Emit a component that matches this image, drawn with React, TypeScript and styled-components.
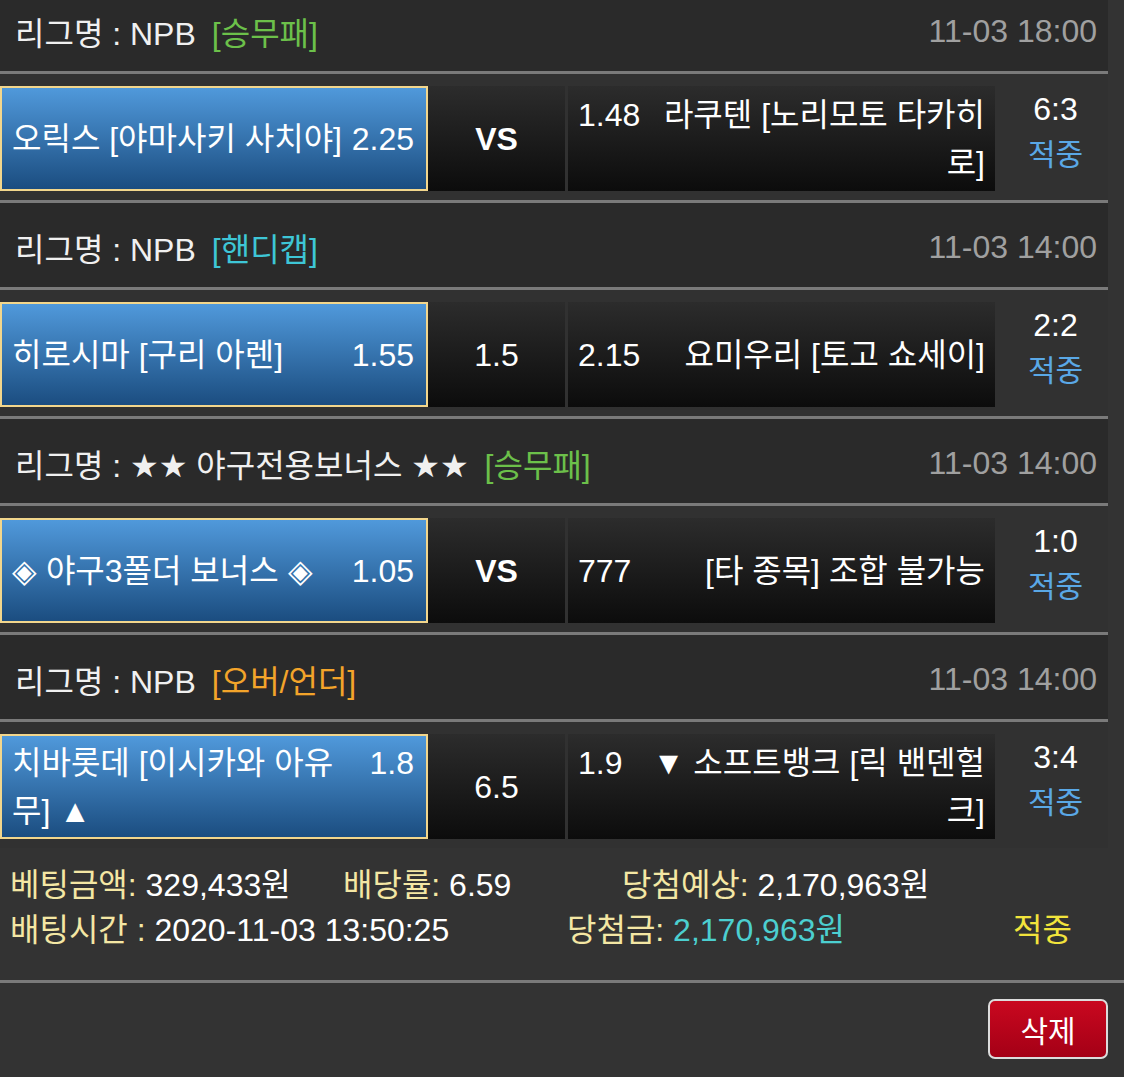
import React from "react";
import styled, { createGlobalStyle } from "styled-components";

const GlobalStyle = createGlobalStyle`
  html, body { margin: 0; padding: 0; background: #333333; }
  body {
    font-family: "Liberation Sans", "Noto Sans CJK KR", sans-serif;
    color: #ffffff;
  }
  * { box-sizing: border-box; }
`;

const Page = styled.div`
  width: 1124px;
  height: 1077px;
  overflow: hidden;
  background: #333333;
  display: flex;
  flex-direction: column;
`;

const List = styled.div`
  width: 1108px;
  margin-top: -13px;
`;

const LeagueHeader = styled.div`
  box-sizing: content-box;
  height: 80px;
  display: flex;
  align-items: center;
  justify-content: space-between;
  padding: 4px 11px 0 15px;
  background: #2a2a2a;
  border-bottom: 3px solid #7a7a7a;
  font-size: 32px;
`;

const LeagueName = styled.span`
  color: #f0f0f0;
  white-space: pre;
  font-family: "Liberation Sans", "DejaVu Sans", "Noto Sans CJK KR", sans-serif;
`;

const Tag = styled.span<{ $color: string }>`
  color: ${(p) => p.$color};
  margin-left: 16px;
`;

const DateText = styled.span`
  color: #a0a0a0;
`;

const MatchRow = styled.div<{ $last?: boolean }>`
  box-sizing: content-box;
  display: flex;
  padding: 12px 0 8px;
  background: #313131;
  border-bottom: ${(p) => (p.$last ? "none" : "3px solid #7a7a7a")};
`;

const HomeCell = styled.div`
  width: 428px;
  height: 105px;
  display: flex;
  align-items: center;
  padding: 0 12px 0 10px;
  border: 2px solid #f2d68c;
  background: linear-gradient(#5099db, #1b4d80);
  font-size: 32px;
  line-height: 48px;
`;

const CellText = styled.div<{ $align: "left" | "right" }>`
  width: 100%;
  text-align: ${(p) => p.$align};
`;

const Odds = styled.span<{ $side: "left" | "right" }>`
  float: ${(p) => p.$side};
`;

const DarkCell = styled.div`
  height: 105px;
  display: flex;
  align-items: center;
  background: linear-gradient(#2c2c2c, #0c0c0c);
  font-size: 32px;
  line-height: 48px;
`;

const MidCell = styled(DarkCell)<{ $bold?: boolean }>`
  width: 137px;
  justify-content: center;
  font-weight: ${(p) => (p.$bold ? 700 : 400)};
`;

const AwayCell = styled(DarkCell)`
  width: 427px;
  margin-left: 3px;
  padding: 0 10px;
`;

const ScoreCol = styled.div`
  flex: 1;
  display: flex;
  flex-direction: column;
  align-items: center;
  justify-content: center;
  padding: 0 0 14px 8px;
  line-height: 46px;
`;

const Score = styled.span`
  font-size: 32px;
  color: #ffffff;
`;

const Result = styled.span<{ $color: string }>`
  font-size: 30px;
  color: ${(p) => p.$color};
`;

const Summary = styled.div`
  padding: 15px 0 27px 10px;
  font-size: 32px;
  line-height: 45px;
`;

const SummaryRow = styled.div<{ $cols: string }>`
  display: grid;
  grid-template-columns: ${(p) => p.$cols};
  white-space: nowrap;
`;

const Label = styled.span`
  color: #f4e7a4;
`;

const Value = styled.span<{ $color?: string }>`
  color: ${(p) => p.$color || "#ffffff"};
`;

const Footer = styled.div`
  flex: 1;
  display: flex;
  justify-content: flex-end;
  align-items: flex-start;
  padding: 16px 16px 0 0;
  border-top: 3px solid #7a7a7a;
`;

const DeleteButton = styled.button`
  width: 120px;
  height: 60px;
  border: 2px solid #dcdcdc;
  border-radius: 7px;
  background: linear-gradient(#c9081f, #a40016);
  color: #ffffff;
  font-family: "Liberation Sans", "Noto Sans CJK KR", sans-serif;
  font-size: 30px;
  padding: 0;
`;

type Match = {
  league: string;
  tag: string;
  tagColor: string;
  date: string;
  home: string;
  homeOdds: string;
  mid: string;
  midBold?: boolean;
  awayOdds: string;
  away: string;
  score: string;
};

const GREEN = "#6cc04a";
const CYAN = "#3ec6d6";
const ORANGE = "#f3a42a";

const matches: Match[] = [
  {
    league: "리그명 : NPB",
    tag: "[승무패]",
    tagColor: GREEN,
    date: "11-03 18:00",
    home: "오릭스 [야마사키 사치야]",
    homeOdds: "2.25",
    mid: "VS",
    midBold: true,
    awayOdds: "1.48",
    away: "라쿠텐 [노리모토 타카히로]",
    score: "6:3",
  },
  {
    league: "리그명 : NPB",
    tag: "[핸디캡]",
    tagColor: CYAN,
    date: "11-03 14:00",
    home: "히로시마 [구리 아렌]",
    homeOdds: "1.55",
    mid: "1.5",
    awayOdds: "2.15",
    away: "요미우리 [토고 쇼세이]",
    score: "2:2",
  },
  {
    league: "리그명 : ★★ 야구전용보너스 ★★",
    tag: "[승무패]",
    tagColor: GREEN,
    date: "11-03 14:00",
    home: "◈ 야구3폴더 보너스 ◈",
    homeOdds: "1.05",
    mid: "VS",
    midBold: true,
    awayOdds: "777",
    away: "[타 종목] 조합 불가능",
    score: "1:0",
  },
  {
    league: "리그명 : NPB",
    tag: "[오버/언더]",
    tagColor: ORANGE,
    date: "11-03 14:00",
    home: "치바롯데 [이시카와 아유무] ▲",
    homeOdds: "1.8",
    mid: "6.5",
    awayOdds: "1.9",
    away: "▼ 소프트뱅크 [릭 밴덴헐크]",
    score: "3:4",
  },
];

export default function App() {
  return (
    <Page>
      <GlobalStyle />
      <List>
        {matches.map((m, i) => (
          <React.Fragment key={i}>
            <LeagueHeader>
              <LeagueName>
                {m.league}
                <Tag $color={m.tagColor}>{m.tag}</Tag>
              </LeagueName>
              <DateText>{m.date}</DateText>
            </LeagueHeader>
            <MatchRow $last={i === matches.length - 1}>
              <HomeCell>
                <CellText $align="left">
                  <Odds $side="right">{m.homeOdds}</Odds>
                  {m.home}
                </CellText>
              </HomeCell>
              <MidCell $bold={m.midBold}>{m.mid}</MidCell>
              <AwayCell>
                <CellText $align="right">
                  <Odds $side="left">{m.awayOdds}</Odds>
                  {m.away}
                </CellText>
              </AwayCell>
              <ScoreCol>
                <Score>{m.score}</Score>
                <Result $color="#5aa8e6">적중</Result>
              </ScoreCol>
            </MatchRow>
          </React.Fragment>
        ))}
      </List>
      <Summary>
        <SummaryRow $cols="333px 279px auto">
          <span>
            <Label>베팅금액: </Label>
            <Value>329,433원</Value>
          </span>
          <span>
            <Label>배당률: </Label>
            <Value>6.59</Value>
          </span>
          <span>
            <Label>당첨예상: </Label>
            <Value>2,170,963원</Value>
          </span>
        </SummaryRow>
        <SummaryRow $cols="557px 446px auto">
          <span>
            <Label>배팅시간 : </Label>
            <Value>2020-11-03 13:50:25</Value>
          </span>
          <span>
            <Label>당첨금: </Label>
            <Value $color="#4ccfd0">2,170,963원</Value>
          </span>
          <span>
            <Value $color="#f2e43c">적중</Value>
          </span>
        </SummaryRow>
      </Summary>
      <Footer>
        <DeleteButton>삭제</DeleteButton>
      </Footer>
    </Page>
  );
}
